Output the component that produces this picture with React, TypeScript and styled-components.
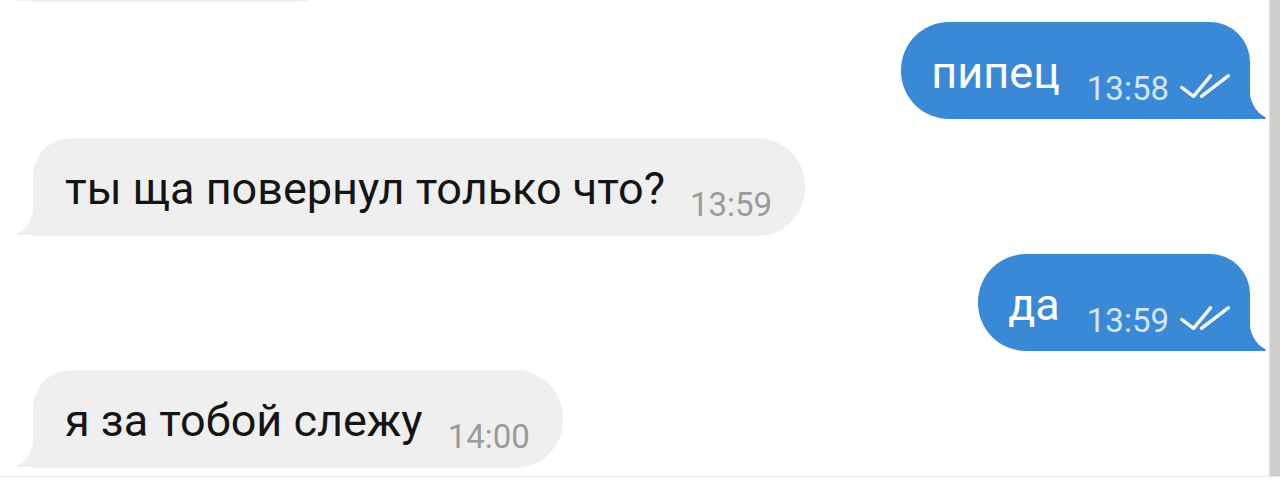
import React from 'react';
import styled, {createGlobalStyle, css} from 'styled-components';

const GlobalStyle = createGlobalStyle`
    html, body {
        margin: 0;
        padding: 0;
        background: #ffffff;
        overflow: hidden;
    }
    body {
        font-family: Roboto, 'Noto Sans', 'Liberation Sans', sans-serif;
    }
`;

type Side = 'in' | 'out';

const Screen = styled.div`
    height: 481px;
    display: flex;
    flex-direction: column;
    background: #ffffff;
`;

const Main = styled.div`
    flex: 1;
    display: flex;
    min-height: 0;
`;

const Chat = styled.div`
    flex: 1;
    overflow: hidden;
    display: flex;
    flex-direction: column;
    gap: 19px;
    padding: 0 19px 0 33px;
`;

const Scrollbar = styled.div`
    width: 10px;
    background: #cecece;
    border-left: 1px solid #e3e3e3;
`;

const Footer = styled.div`
    height: 4px;
    border-top: 1px solid #e9e9e9;
    background: #ffffff;
`;

const Row = styled.div<{$side: Side, $partial?: boolean}>`
    display: flex;
    justify-content: ${(p) => (p.$side === 'out' ? 'flex-end' : 'flex-start')};
    ${(p) => p.$partial && css`
        margin-top: -96px;
        margin-bottom: 2px;
    `}
`;

const Bubble = styled.div<{$side: Side, $width?: number}>`
    position: relative;
    box-sizing: border-box;
    height: 97px;
    padding-top: 24px;
    white-space: nowrap;
    font-size: 45px;
    line-height: 54px;
    ${(p) => p.$width && css`
        width: ${p.$width}px;
    `}
    ${(p) => (p.$side === 'out' ? css`
        background: #3a89d6;
        color: #ffffff;
        padding-left: 30px;
        padding-right: 20px;
        border-radius: 48px 40px 0 48px;
    ` : css`
        background: #efefef;
        color: #141414;
        padding-left: 32px;
        padding-right: 33px;
        border-radius: 38px 48px 48px 0;
        box-shadow: 0 1px 1px rgba(0, 0, 0, 0.07);
    `)}
`;

const Tail = styled.svg<{$side: Side}>`
    position: absolute;
    bottom: 0;
    width: 18px;
    height: 34px;
    ${(p) => (p.$side === 'out' ? css`
        right: -17px;
        fill: #3a89d6;
    ` : css`
        left: -17px;
        fill: #efefef;
    `)}
`;

const Meta = styled.span<{$side: Side}>`
    margin-left: ${(p) => (p.$side === 'out' ? 27 : 25)}px;
    font-size: 33px;
    line-height: 0;
    vertical-align: -12px;
    color: ${(p) => (p.$side === 'out' ? 'rgba(255, 255, 255, 0.8)' : '#9b9b9b')};
`;

const Checks = styled.svg`
    width: 50px;
    height: 24px;
    margin-left: 11px;
    vertical-align: 2px;
    fill: none;
    stroke: rgba(255, 255, 255, 0.95);
    stroke-width: 3.4;
    stroke-linecap: round;
    stroke-linejoin: round;
`;

const BubbleTail = ({side}: {side: Side}) => (
    <Tail $side={side} viewBox='0 0 18 34'>
        {side === 'in' ?
            <path d='M18 0 C18 15 12 27 2 32 C0.6 32.8 0.8 34 2.4 34 L18 34 Z'/> :
            <path d='M0 0 C0 15 6 27 16 32 C17.4 32.8 17.2 34 15.6 34 L0 34 Z'/>}
    </Tail>
);

type Message = {
    side: Side,
    text: string,
    time?: string,
    width?: number,
}

// the first one is scrolled almost out of view, only its bottom edge shows
const messages: Message[] = [
    {side: 'in', text: '', width: 312},
    {side: 'out', text: 'пипец', time: '13:58'},
    {side: 'in', text: 'ты ща повернул только что?', time: '13:59'},
    {side: 'out', text: 'да', time: '13:59'},
    {side: 'in', text: 'я за тобой слежу', time: '14:00'},
];

const MessageRow = ({message}: {message: Message}) => (
    <Row
        $side={message.side}
        $partial={Boolean(message.width)}
    >
        <Bubble
            $side={message.side}
            $width={message.width}
        >
            {message.text}
            {message.time &&
                <Meta $side={message.side}>
                    {message.time}
                    {message.side === 'out' &&
                        <Checks viewBox='0 0 50 24'>
                            <path d='M1.8 13.5 L13.5 22.3 L30.5 1.8'/>
                            <path d='M21.5 22.3 L48.2 1.8'/>
                        </Checks>}
                </Meta>}
            <BubbleTail side={message.side}/>
        </Bubble>
    </Row>
);

const App = () => {
    return (
        <Screen>
            <GlobalStyle/>
            <Main>
                <Chat>
                    {messages.map((m, i) => (
                        <MessageRow
                            key={i}
                            message={m}
                        />
                    ))}
                </Chat>
                <Scrollbar/>
            </Main>
            <Footer/>
        </Screen>
    );
};

export default App;
